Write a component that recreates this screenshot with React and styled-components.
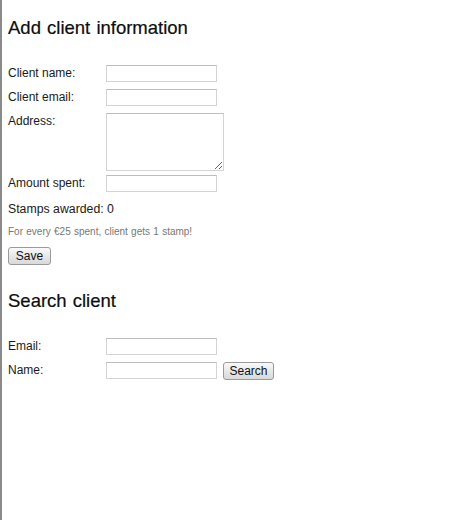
import React from 'react';
import styled, { createGlobalStyle } from 'styled-components';

const GlobalStyle = createGlobalStyle`
  html, body {
    margin: 0;
    padding: 0;
    background: #fff;
  }
`;

const Page = styled.div`
  min-height: 520px;
  box-sizing: border-box;
  border-left: 2px solid #8a8a8a;
  padding: 17px 0 0 6px;
  font-family: "Liberation Sans", Arial, sans-serif;
  color: #1a1a1a;
`;

const Heading = styled.h2`
  margin: 0 0 ${props => props.gap}px 0;
  font-size: 18.5px;
  line-height: 22px;
  font-weight: normal;
  word-spacing: 1px;
  color: #0d0d0d;
  -webkit-text-stroke: 0.2px #0d0d0d;
`;

const Form = styled.div`
  display: flex;
  flex-direction: column;
  gap: 7px;
`;

const Row = styled.div`
  display: flex;
  align-items: flex-start;
  margin-top: ${props => (props.tight ? '-3px' : '0')};
`;

const Label = styled.label`
  width: 98px;
  flex: none;
  padding-top: 1px;
  font-size: 12px;
  line-height: 14px;
`;

const Input = styled.input`
  box-sizing: border-box;
  width: 111px;
  height: 17px;
  margin: 0;
  padding: 0 3px;
  border: 1px solid #d4d4d4;
  border-top-color: #bdbdbd;
  background: #fff;
  font-family: inherit;
  font-size: 12px;
  outline: none;
`;

const TextArea = styled.textarea`
  box-sizing: border-box;
  width: 118px;
  height: 58px;
  margin: 0;
  padding: 2px 3px;
  border: 1px solid #d4d4d4;
  border-top-color: #bdbdbd;
  font-family: inherit;
  font-size: 12px;
  outline: none;
  display: block;
`;

const Stamps = styled.div`
  margin-top: 10px;
  font-size: 12.3px;
  line-height: 14px;
`;

const Note = styled.p`
  margin: 10px 0 8px 0;
  font-size: 10px;
  line-height: 12px;
  color: #777;
  word-spacing: 0.5px;
`;

const Button = styled.button`
  box-sizing: border-box;
  height: 18px;
  width: ${props => props.w}px;
  margin: 0 0 0 ${props => props.offset || 0}px;
  padding: 0;
  border: 1px solid #9a9a9a;
  border-radius: 3px;
  background: linear-gradient(#fafafa, #e6e6e6 55%, #d9d9d9);
  font-family: inherit;
  font-size: 12px;
  line-height: 16px;
  color: #111;
  cursor: pointer;
`;

const Section = styled.section`
  margin-top: ${props => props.top || 0}px;
`;

export default function App() {
  return (
    <>
      <GlobalStyle />
      <Page>
        <Section>
          <Heading gap={26}>Add client information</Heading>
          <Form>
            <Row>
              <Label>Client name:</Label>
              <Input type="text" />
            </Row>
            <Row>
              <Label>Client email:</Label>
              <Input type="text" />
            </Row>
            <Row>
              <Label>Address:</Label>
              <TextArea />
            </Row>
            <Row tight>
              <Label>Amount spent:</Label>
              <Input type="text" />
            </Row>
          </Form>
          <Stamps>Stamps awarded: 0</Stamps>
          <Note>For every €25 spent, client gets 1 stamp!</Note>
          <Button w={43}>Save</Button>
        </Section>
        <Section top={25}>
          <Heading gap={26}>Search client</Heading>
          <Form>
            <Row>
              <Label>Email:</Label>
              <Input type="text" />
            </Row>
            <Row>
              <Label>Name:</Label>
              <Input type="text" />
              <Button w={51} offset={6}>Search</Button>
            </Row>
          </Form>
        </Section>
      </Page>
    </>
  );
}
